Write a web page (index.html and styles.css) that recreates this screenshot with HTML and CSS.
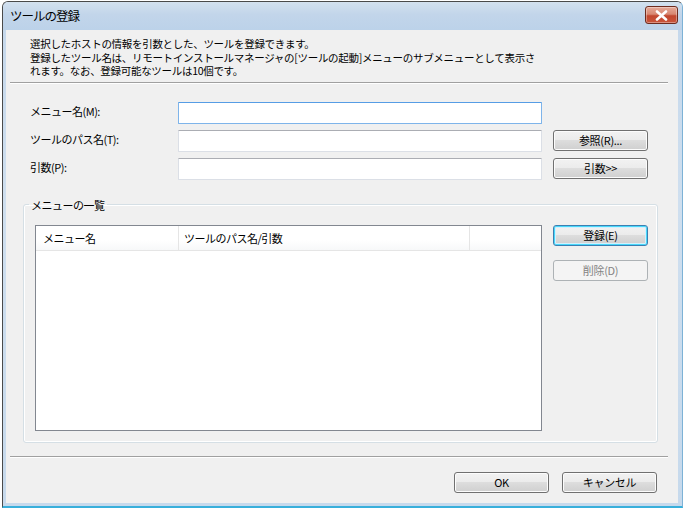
FILE: index.html
```html
<!DOCTYPE html>
<html lang="ja">
<head>
    <meta charset="UTF-8">
    <title>ツールの登録</title>
    <link rel="stylesheet" href="styles.css">
</head>
<body>

<div class="window">
    <!-- Title bar -->
    <div class="titlebar">
        <span class="title">ツールの登録</span>
        <button class="close-btn" aria-label="閉じる">
            <svg width="13" height="11" viewBox="0 0 13 11">
                <path d="M2 1.5 L11 9.5 M11 1.5 L2 9.5" stroke="#fff" stroke-width="2.6" stroke-linecap="round"/>
            </svg>
        </button>
    </div>

    <div class="client">
        <p class="intro">
            選択したホストの情報を引数とした、ツールを登録できます。<br>
            登録したツール名は、リモートインストールマネージャの[ツールの起動]メニューのサブメニューとして表示さ<br>
            れます。なお、登録可能なツールは10個です。
        </p>

        <div class="sep"></div>

        <div class="form">
            <label>メニュー名(M):</label>
            <input type="text" class="field focused">
            <span></span>

            <label>ツールのパス名(T):</label>
            <input type="text" class="field">
            <button class="btn">参照(R)...</button>

            <label>引数(P):</label>
            <input type="text" class="field">
            <button class="btn">引数&gt;&gt;</button>
        </div>

        <!-- Menu list group -->
        <fieldset class="group">
            <legend>メニューの一覧</legend>
            <div class="group-body">
                <div class="listview">
                    <div class="lv-header">
                        <div class="col col-name">メニュー名</div>
                        <div class="col col-path">ツールのパス名/引数</div>
                        <div class="col col-rest"></div>
                    </div>
                </div>
                <div class="side-btns">
                    <button class="btn default">登録(E)</button>
                    <button class="btn" disabled>削除(D)</button>
                </div>
            </div>
        </fieldset>

        <div class="sep bottom-sep"></div>

        <div class="footer">
            <button class="btn">OK</button>
            <button class="btn">キャンセル</button>
        </div>
    </div>
</div>

</body>
</html>
```

FILE: styles.css
```css
* {
    box-sizing: border-box;
}

body {
    margin: 0;
    background: #fff;
    font-family: "Noto Sans CJK JP", "Noto Sans", sans-serif;
    font-size: 11px;
    color: #000;
}

.window {
    margin: 1px 0 0 2px;
    width: 681px;
    height: 507px;
    border: 1px solid #4a4a4a;
    border-right-color: #7db2d6;
    border-bottom: 2px solid #38afdb;
    border-radius: 6px 6px 0 0;
    background: linear-gradient(180deg, #c4d7eb 0%, #cfdfef 40%, #c6d9ec 100%);
    display: flex;
    flex-direction: column;
}

/* Title bar */
.titlebar {
    height: 28px;
    display: flex;
    justify-content: space-between;
    align-items: flex-start;
    padding: 0 4px 0 7px;
    background: linear-gradient(180deg, #d3e1ef 0%, #c2d5ea 45%, #bcd2e9 100%);
    border-radius: 5px 5px 0 0;
}

.title {
    font-size: 12.5px;
    letter-spacing: -1px;
    line-height: 28px;
    color: #000;
}

.close-btn {
    margin-top: 4px;
    width: 33px;
    height: 18px;
    padding: 0;
    border: 1px solid #6e2b1e;
    border-radius: 3px;
    background: linear-gradient(180deg, #e6a998 0%, #d88872 45%, #c2472f 55%, #c9553b 100%);
    display: flex;
    align-items: center;
    justify-content: center;
    box-shadow: inset 0 0 0 1px rgba(255, 255, 255, 0.35);
}

/* Client area */
.client {
    margin: 0 4px 3px 3px;
    flex: 1;
    background: #f0f0f0;
    padding-top: 7px;
    display: flex;
    flex-direction: column;
}

.intro {
    margin: 0 0 0 24px;
    font-size: 10.5px;
    line-height: 13.5px;
    letter-spacing: -0.3px;
    white-space: nowrap;
}

.sep {
    margin: 4px 10px 0 4px;
    height: 2px;
    border-top: 1px solid #a0a0a0;
    border-bottom: 1px solid #fff;
}

/* Input rows */
.form {
    margin-top: 18px;
    padding-left: 24px;
    display: grid;
    grid-template-columns: 137px 364px 95px;
    grid-auto-rows: 22px;
    column-gap: 11px;
    row-gap: 6px;
    align-items: center;
}

.form label {
    letter-spacing: -0.5px;
    margin-top: -3px;
}

.field {
    height: 22px;
    width: 100%;
    border: 1px solid #dbdfe6;
    border-top-color: #abadb3;
    border-radius: 1px;
    background: #fff;
    outline: none;
}

.field.focused {
    border-color: #7eb4ea;
    border-top-color: #569de5;
}

.btn {
    height: 21px;
    width: 95px;
    padding: 0;
    border: 1px solid #707070;
    border-radius: 3px;
    background: linear-gradient(180deg, #f2f2f2 0%, #ebebeb 49%, #dddddd 50%, #cfcfcf 100%);
    box-shadow: inset 0 0 0 1px #fcfcfc;
    font-family: inherit;
    font-size: 11px;
    letter-spacing: -0.3px;
    color: #000;
    line-height: 19px;
}

.btn.default {
    border-color: #3c7fb1;
    box-shadow: inset 0 0 0 1px #48d8fb, inset 0 0 0 2px #d3f0fd;
}

.btn:disabled {
    border-color: #adb2b5;
    background: #f4f4f4;
    box-shadow: none;
    color: #838383;
}

/* Group box */
.group {
    margin: 18px 20px 0 17px;
    padding: 0;
    border: 1px solid #d5dfe5;
    border-radius: 3px;
    box-shadow: inset 0 0 0 1px #fff;
}

.group legend {
    margin-left: 5px;
    padding: 0 2px;
    line-height: 14px;
    letter-spacing: -0.5px;
}

.group-body {
    display: flex;
    gap: 11px;
    padding: 13px 8px 11px 11px;
}

.listview {
    width: 507px;
    height: 206px;
    background: #fff;
    border: 1px solid #828790;
}

.lv-header {
    display: flex;
    height: 25px;
    border-bottom: 1px solid #e5e5e5;
    background: linear-gradient(180deg, #fff 0%, #fff 60%, #f7f8f9 100%);
}

.col {
    line-height: 24px;
    padding-left: 7px;
    border-right: 1px solid #e5e5e5;
    letter-spacing: -0.5px;
}

.col-name {
    width: 143px;
}

.col-path {
    width: 291px;
    padding-left: 5px;
}

.col-rest {
    width: 71px;
    border-right: none;
}

.side-btns {
    display: flex;
    flex-direction: column;
    gap: 14px;
}

/* Bottom buttons */
.bottom-sep {
    margin-top: 13px;
}

.footer {
    margin-top: 14px;
    display: flex;
    justify-content: flex-end;
    gap: 13px;
    padding-right: 21px;
}
```
